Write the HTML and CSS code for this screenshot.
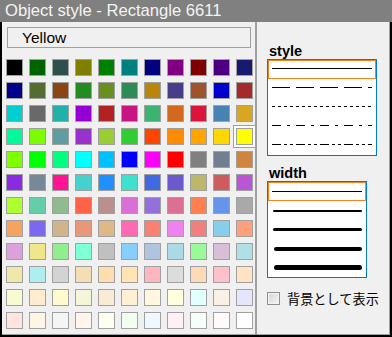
FILE: index.html
```html
<!DOCTYPE html>
<html lang="ja">
<head>
    <meta charset="UTF-8">
    <title>Object style</title>
    <link rel="stylesheet" href="styles.css">
</head>
<body>
    <div class="window">
        <div class="titlebar">Object style - Rectangle 6611</div>
        <div class="frame">
            <div class="content">
                <div class="colors">
                    <div class="color-name">Yellow</div>
                    <div class="palette" id="palette"></div>
                </div>
                <div class="options">
                    <div class="label">style</div>
                    <div class="list style-list">
                        <div class="item selected"><svg width="108" height="19"><line x1="4" y1="8.5" x2="104" y2="8.5" /></svg></div>
                        <div class="item"><svg width="108" height="19"><line x1="4" y1="8.5" x2="104" y2="8.5" stroke-dasharray="18 6" /></svg></div>
                        <div class="item"><svg width="108" height="19"><line x1="4" y1="8.5" x2="104" y2="8.5" stroke-dasharray="3 3" /></svg></div>
                        <div class="item"><svg width="108" height="19"><line x1="4" y1="8.5" x2="104" y2="8.5" stroke-dasharray="9 6 3 6" /></svg></div>
                        <div class="item"><svg width="108" height="19"><line x1="4" y1="8.5" x2="104" y2="8.5" stroke-dasharray="9 3 3 3 3 3" /></svg></div>
                    </div>
                    <div class="label label-width">width</div>
                    <div class="list width-list">
                        <div class="item selected"><svg width="98" height="19"><line x1="4" y1="9.5" x2="94" y2="9.5" /></svg></div>
                        <div class="item"><svg width="98" height="19"><line x1="6" y1="10" x2="93" y2="10" stroke-linecap="round" /></svg></div>
                        <div class="item"><svg width="98" height="19"><line x1="6.5" y1="9.5" x2="92.5" y2="9.5" stroke-linecap="round" /></svg></div>
                        <div class="item"><svg width="98" height="19"><line x1="8" y1="10" x2="92" y2="10" stroke-linecap="round" /></svg></div>
                        <div class="item"><svg width="98" height="19"><line x1="8.5" y1="9.5" x2="91.5" y2="9.5" stroke-linecap="round" /></svg></div>
                    </div>
                    <label class="check"><span class="check-box"></span>背景として表示</label>
                </div>
            </div>
        </div>
    </div>
    <script>
        // Named colours, row by row
        const colors = [
            'black', 'darkgreen', 'darkslategray', 'olive', 'green', 'teal', 'navy', 'purple', 'maroon', 'indigo', 'midnightblue',
            'darkblue', 'darkolivegreen', 'saddlebrown', 'forestgreen', 'olivedrab', 'seagreen', 'darkgoldenrod', 'darkslateblue', 'sienna', 'mediumblue', 'brown',
            'darkturquoise', 'dimgray', 'lightseagreen', 'darkviolet', 'firebrick', 'mediumvioletred', 'mediumseagreen', 'chocolate', 'crimson', 'steelblue', 'goldenrod',
            'mediumspringgreen', 'lawngreen', 'cadetblue', 'darkorchid', 'yellowgreen', 'limegreen', 'orangered', 'darkorange', 'orange', 'gold', 'yellow',
            'chartreuse', 'lime', 'springgreen', 'aqua', 'deepskyblue', 'blue', 'magenta', 'red', 'gray', 'slategray', 'peru',
            'blueviolet', 'lightslategray', 'deeppink', 'mediumturquoise', 'dodgerblue', 'turquoise', 'royalblue', 'slateblue', 'darkkhaki', 'indianred', 'mediumorchid',
            'greenyellow', 'mediumaquamarine', 'darkseagreen', 'tomato', 'rosybrown', 'orchid', 'mediumpurple', 'palevioletred', 'coral', 'cornflowerblue', 'darkgray',
            'sandybrown', 'mediumslateblue', 'tan', 'darksalmon', 'burlywood', 'hotpink', 'salmon', 'violet', 'lightcoral', 'skyblue', 'lightsalmon',
            'plum', 'khaki', 'lightgreen', 'aquamarine', 'silver', 'lightskyblue', 'lightsteelblue', 'lightblue', 'palegreen', 'thistle', 'powderblue',
            'palegoldenrod', 'paleturquoise', 'lightgrey', 'wheat', 'navajowhite', 'moccasin', 'lightpink', 'gainsboro', 'peachpuff', 'pink', 'bisque',
            'lightgoldenrodyellow', 'blanchedalmond', 'lemonchiffon', 'beige', 'antiquewhite', 'papayawhip', 'cornsilk', 'lightyellow', 'lightcyan', 'linen', 'lavender',
            'mistyrose', 'oldlace', 'whitesmoke', 'seashell', 'ivory', 'honeydew', 'aliceblue', 'lavenderblush', 'mintcream', 'snow', 'white'
        ];
        const palette = document.getElementById('palette');
        colors.forEach(name => {
            const cell = document.createElement('div');
            cell.className = name === 'yellow' ? 'cell selected' : 'cell';
            cell.title = name;
            const swatch = document.createElement('span');
            swatch.className = 'swatch';
            swatch.style.background = name;
            cell.appendChild(swatch);
            palette.appendChild(cell);
        });
    </script>
</body>
</html>
```

FILE: styles.css
```css
body {
    margin: 0;
    background-color: #f0f0f0;
    font-family: "Liberation Sans", Arial, sans-serif;
    color: #000;
}
.window {
    width: 392px;
    height: 337px;
    display: flex;
    flex-direction: column;
}
.titlebar {
    height: 22px;
    line-height: 22px;
    padding-left: 5px;
    background-color: #808080;
    color: #f4f4f4;
    font-size: 16.6px;
    white-space: nowrap;
}
.frame {
    flex: 1;
    display: flex;
    border: 2px solid #000;
    border-top: none;
}
.content {
    flex: 1;
    display: flex;
    background-color: #f0f0f0;
    border-right: 1px solid #a0a0a0;
    border-bottom: 1px solid #a0a0a0;
}
.colors {
    width: 253px;
    overflow: hidden;
    padding-top: 5px;
}
.color-name {
    width: 244px;
    height: 21px;
    box-sizing: border-box;
    margin-left: 5px;
    padding-left: 14px;
    border: 1px solid #a0a0a0;
    font-size: 15.5px;
    line-height: 19px;
}
.palette {
    display: grid;
    grid-template-columns: repeat(11, 23px);
    grid-auto-rows: 23px;
    margin: 8px 0 0 1px;
    width: 253px;
}
.cell {
    box-sizing: border-box;
    padding: 3px;
}
.cell.selected {
    padding: 2px;
    background-color: #fff;
    border: 1px solid #a0a0a0;
}
.swatch {
    display: block;
    width: 17px;
    height: 17px;
    box-sizing: border-box;
    border: 1px solid #a0a0a0;
}
.options {
    flex: 1;
    border-left: 2px solid #a0a0a0;
    padding: 21px 0 0 10px;
}
.label {
    font-size: 14.5px;
    font-weight: bold;
    line-height: 16px;
    padding-left: 2px;
}
.label-width {
    margin-top: 9px;
}
.list {
    box-sizing: border-box;
    border: 1px solid #0078d7;
    background-color: #fff;
}
.style-list {
    width: 110px;
}
.width-list {
    width: 100px;
}
.item {
    height: 19px;
    box-sizing: border-box;
}
.item svg {
    display: block;
}
.item line {
    stroke: #000;
    stroke-width: 1;
}
.width-list .item:nth-child(2) line { stroke-width: 2; }
.width-list .item:nth-child(3) line { stroke-width: 3; }
.width-list .item:nth-child(4) line { stroke-width: 4; }
.width-list .item:nth-child(5) line { stroke-width: 5; }
.item.selected {
    box-shadow: inset 0 0 0 1px #f7831f;
}
.check {
    display: flex;
    align-items: center;
    gap: 7px;
    margin-top: 14px;
    font-family: "Noto Sans CJK JP", sans-serif;
    font-size: 13.2px;
    line-height: 13px;
    color: #000;
}
.check-box {
    width: 13px;
    height: 13px;
    box-sizing: border-box;
    border: 1px solid #8f8f8f;
    box-shadow: inset 0 0 0 1px #f4f4f4;
    background: linear-gradient(135deg, #d6d6d6, #f6f6f6);
}
```
